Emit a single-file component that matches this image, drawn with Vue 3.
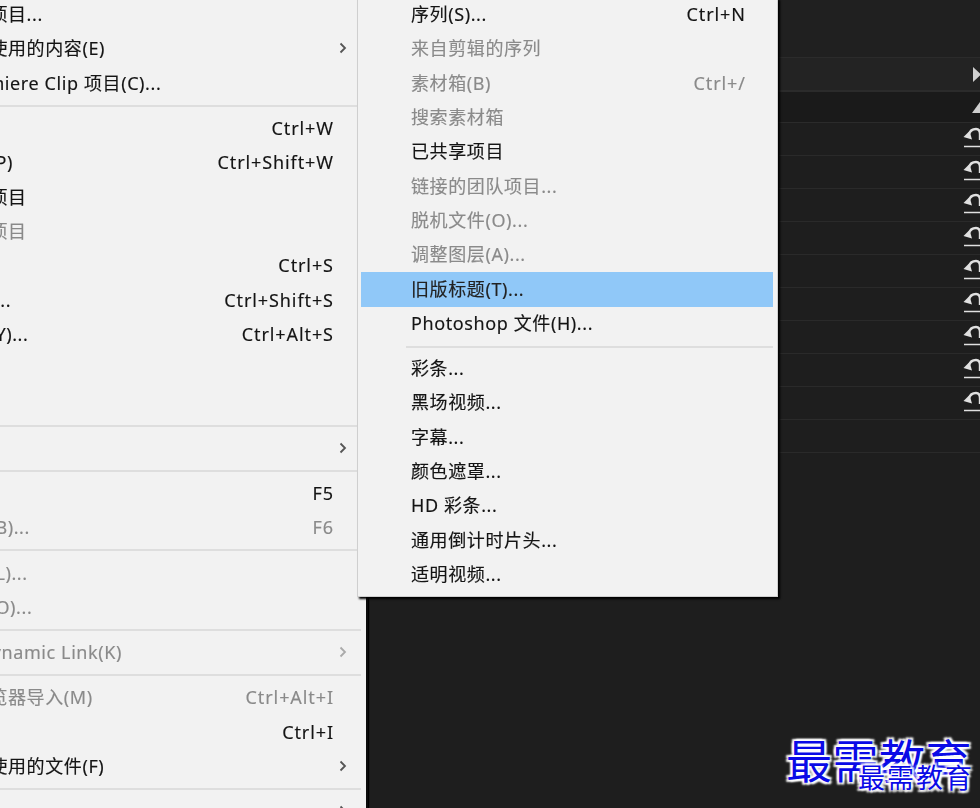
<script setup>
const fileMenu = [
  { t: '打开团队项目...' },
  { t: '打开最近使用的内容(E)', arrow: true },
  { t: '转换 Premiere Clip 项目(C)...' },
  { sep: true },
  { t: '关闭(C)', s: 'Ctrl+W' },
  { t: '关闭项目(P)', s: 'Ctrl+Shift+W' },
  { t: '关闭所有项目' },
  { t: '刷新所有项目', dim: true },
  { t: '保存(S)', s: 'Ctrl+S' },
  { t: '另存为(A)...', s: 'Ctrl+Shift+S' },
  { t: '保存副本(Y)...', s: 'Ctrl+Alt+S' },
  { t: '全部保存' },
  { t: '还原(R)' },
  { sep: true },
  { t: '同步设置', arrow: true },
  { sep: true },
  { t: '捕捉(T)...', s: 'F5' },
  { t: '批量捕捉(B)...', s: 'F6', dim: true },
  { sep: true },
  { t: '链接媒体(L)...', dim: true },
  { t: '设为脱机(O)...', dim: true },
  { sep: true },
  { t: 'Adobe Dynamic Link(K)', arrow: true, dim: true },
  { sep: true },
  { t: '从媒体浏览器导入(M)', s: 'Ctrl+Alt+I', dim: true },
  { t: '导入(I)...', s: 'Ctrl+I' },
  { t: '导入最近使用的文件(F)', arrow: true },
  { sep: true },
  { t: '导出(E)', arrow: true },
]
const newMenu = [
  { t: '序列(S)...', s: 'Ctrl+N' },
  { t: '来自剪辑的序列', dim: true },
  { t: '素材箱(B)', s: 'Ctrl+/', dim: true },
  { t: '搜索素材箱', dim: true },
  { t: '已共享项目' },
  { t: '链接的团队项目...', dim: true },
  { t: '脱机文件(O)...', dim: true },
  { t: '调整图层(A)...', dim: true },
  { t: '旧版标题(T)...', active: true },
  { t: 'Photoshop 文件(H)...' },
  { sep: true },
  { t: '彩条...' },
  { t: '黑场视频...' },
  { t: '字幕...' },
  { t: '颜色遮罩...' },
  { t: 'HD 彩条...' },
  { t: '通用倒计时片头...' },
  { t: '适明视频...' },
]
const panelRows = Array.from({ length: 10 }, (_, i) => i)
</script>

<template>
  <div class="stage">
    <div class="file-menu">
      <template v-for="(m, i) in fileMenu" :key="i">
        <div v-if="m.sep" class="sep"></div>
        <div v-else class="row" :class="{ dim: m.dim }">
          <span>{{ m.t }}</span>
          <span class="key">{{ m.s }}</span>
          <span class="arrow-cell">
            <svg v-if="m.arrow" width="8" height="12" viewBox="0 0 8 12"><path d="M1.500 1.500 6 6l-4.500 4.500" fill="none" stroke="currentColor" stroke-width="1.800"/></svg>
          </span>
        </div>
      </template>
    </div>

    <div class="panel">
      <div class="p-top"></div>
      <div class="p-head">
        <svg class="tri" width="7" height="15" viewBox="0 0 7 15"><path d="M0 0l8 7.500-8 7.500z" fill="#cfcfcf"/></svg>
      </div>
      <div class="p-sub">
        <svg class="tri" width="8" height="11" viewBox="0 0 8 11"><path d="M8 0v11H0z" fill="#cfcfcf"/></svg>
      </div>
      <div v-for="r in panelRows" :key="r" class="p-row">
        <svg v-if="r < 9" class="undo" width="17" height="21" viewBox="0 0 17 21">
          <path d="M0.500 10 6.500 4 9 12.500z" fill="#e0e0e0"/>
          <path d="M6 7.500C7 3.500 10 2 13 2c2.500 0 4 1.500 4 5v6" fill="none" stroke="#e0e0e0" stroke-width="2.400"/>
          <path d="M1 19.500h16" stroke="#e0e0e0" stroke-width="1.500"/>
        </svg>
      </div>
    </div>

    <div class="new-menu">
      <template v-for="(m, i) in newMenu" :key="i">
        <div v-if="m.sep" class="sep sub-sep"></div>
        <div v-else class="row sub-row" :class="{ dim: m.dim, active: m.active }">
          <span>{{ m.t }}</span>
          <span class="key">{{ m.s }}</span>
        </div>
      </template>
    </div>

    <div class="mark mark-big">最需教育</div>
    <div class="mark mark-small">最需教育</div>
  </div>
</template>

<style>
html, body { margin: 0; background: #1e1e1e; }
</style>

<style scoped>
.stage {
  position: relative;
  width: 980px;
  height: 808px;
  overflow: hidden;
  display: flex;
  background: #1e1e1e;
  font-family: "Noto Sans", "Noto Sans CJK SC", sans-serif;
  font-size: 18px;
  letter-spacing: 0.6px;
  color: #141414;
}
.key { letter-spacing: 0.9px; margin-right: -0.9px; }
.file-menu {
  flex: none;
  width: 451px;
  margin: -3px 0 0 -85px;
  background: #f2f2f2;
  border-right: 2px solid #0c0c0c;
  box-shadow: 1px 0 1px #000;
  filter: blur(0.4px);
}
.row {
  height: 34.300px;
  display: grid;
  grid-template-columns: 1fr auto 33px;
  align-items: center;
  white-space: nowrap;
  line-height: 1;
  -webkit-text-stroke: 0.15px currentColor;
}
.dim { color: #8a8a8a; }
.arrow-cell { display: flex; justify-content: flex-start; padding-left: 6px; color: #555; }
.dim .arrow-cell { color: #aaa; }
.sep {
  height: 11px;
  margin: 0 5px 0 85px;
  box-sizing: border-box;
  border-bottom: 2px solid #dedede;
  transform: translateY(-4px);
}
.panel {
  flex: 1;
  min-width: 0;
  display: flex;
  flex-direction: column;
}
.p-top { height: 57px; background: #202020; border-bottom: 1px solid #2b2b2b; }
.p-head { height: 32px; background: #232323; border-bottom: 2px solid #2b2b2b; display: flex; justify-content: flex-end; align-items: center; }
.p-sub { height: 30px; background: #1a1a1a; border-bottom: 1px solid #2b2b2b; display: flex; justify-content: flex-end; align-items: center; }
.p-row {
  height: 32px;
  border-bottom: 1px solid #2a2a2a;
  background: #1e1e1e;
  display: flex;
  justify-content: flex-end;
  align-items: center;
}
.tri { flex: none; }
.undo { flex: none; margin-bottom: 3px; }
.new-menu {
  position: absolute;
  left: 357px;
  top: -2px;
  width: 421px;
  height: 599px;
  box-sizing: border-box;
  background: #f2f2f2;
  border: 1px solid #cfcfcf;
  border-top: 0;
  padding: 0 4px 0 3px;
  box-shadow: 2px 2px 2px #000;
  filter: blur(0.4px);
}
.sub-row {
  grid-template-columns: 1fr auto;
  padding: 0 28px 2px 50px;
  box-sizing: border-box;
}
.sub-row.active { background: #90c8f8; color: #222; }
.sub-sep { margin: 0 0 0 45px; }
.mark {
  position: absolute;
  color: #0a0ae6;
  font-family: "Noto Sans CJK SC", sans-serif;
  font-weight: 400;
  white-space: nowrap;
  line-height: 1;
  text-shadow: 0 0 3px #fff, 0 0 3px #fff, 0 0 2px #fff, 2px 2px 2px #fff, -2px -2px 2px #fff, 2px -2px 2px #fff, -2px 2px 2px #fff;
}
.mark-big { left: 786px; top: 735px; font-size: 46px; letter-spacing: 0.5px; }
.mark-small { left: 858px; top: 763px; font-size: 27px; letter-spacing: 2px; }
</style>
